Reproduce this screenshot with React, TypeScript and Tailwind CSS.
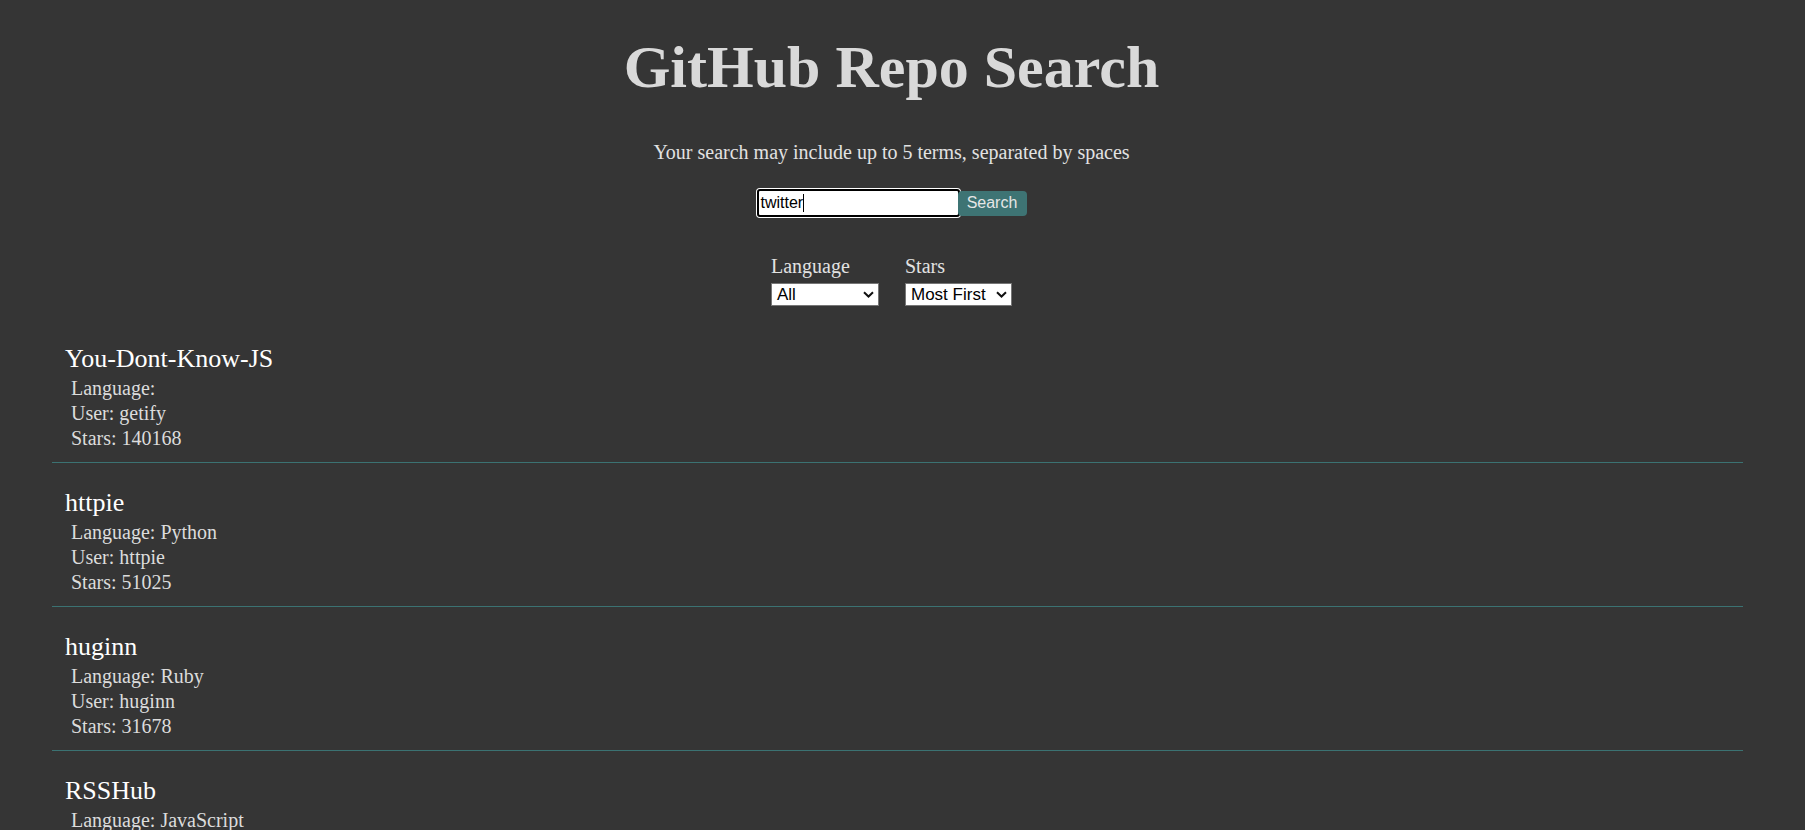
import React from 'react';

type Repo = {
  name: string;
  language: string;
  user: string;
  stars: number;
};

const repos: Repo[] = [
  { name: 'You-Dont-Know-JS', language: '', user: 'getify', stars: 140168 },
  { name: 'httpie', language: 'Python', user: 'httpie', stars: 51025 },
  { name: 'huginn', language: 'Ruby', user: 'huginn', stars: 31678 },
  { name: 'RSSHub', language: 'JavaScript', user: 'DIYgod', stars: 17542 },
  { name: 'twint', language: 'Python', user: 'twintproject', stars: 12384 },
];

function Chevron() {
  return (
    <svg width="11" height="7" viewBox="0 0 11 7" fill="none">
      <path d="M1 1.2 L5.5 5.5 L10 1.2" stroke="#111" strokeWidth="2" />
    </svg>
  );
}

function FakeSelect({ value, width }: { value: string; width: string }) {
  return (
    <div
      className={`${width} h-[23px] flex items-center justify-between bg-white border border-[#767676] pl-[5px] pr-[4px] font-['Liberation_Sans',Arial,sans-serif] text-[17px] leading-none text-black`}
    >
      <span>{value}</span>
      <Chevron />
    </div>
  );
}

function RepoItem({ repo }: { repo: Repo }) {
  return (
    <div className="pt-[23px] pb-[11px] border-b border-[#3b7272]">
      <h2 className="pl-[13px] text-[26px] leading-[33px] text-white">{repo.name}</h2>
      <div className="mt-px pl-[19px] text-[20px] leading-[25px] text-[#dcdcdc]">
        <div>Language: {repo.language}</div>
        <div>User: {repo.user}</div>
        <div>Stars: {repo.stars}</div>
      </div>
    </div>
  );
}

export default function App() {
  return (
    <div className="min-h-screen bg-[#353535] font-['Liberation_Serif',serif] overflow-hidden h-[830px]">
      <header className="pr-[22px] flex flex-col items-center text-center">
        <h1 className="mt-[32px] text-[60px] leading-[70px] font-bold text-[#d9d9d9]">
          GitHub Repo Search
        </h1>
        <p className="mt-[38px] text-[20px] leading-[24px] text-[#e2e2e2]">
          Your search may include up to 5 terms, separated by spaces
        </p>
        <div className="mt-[25px] flex items-center">
          <div className="w-[203px] h-[28px] flex items-center bg-white border-2 border-black rounded-[3px] ring-1 ring-white pl-[2px] font-['Liberation_Sans',Arial,sans-serif] text-[16px] text-black">
            <span>twitter</span>
            <span className="w-px h-[18px] bg-black" />
          </div>
          <button className="-ml-[2px] w-[69px] h-[25px] rounded-[4px] bg-[#3e7474] text-[16px] text-[#e6e6e6] font-['Liberation_Sans',Arial,sans-serif]">
            Search
          </button>
        </div>
        <div className="mt-[37px] flex gap-[26px] text-left">
          <div className="w-[108px]">
            <div className="text-[20px] leading-[24px] text-[#e2e2e2]">Language</div>
            <div className="mt-[5px]">
              <FakeSelect value="All" width="w-[108px]" />
            </div>
          </div>
          <div className="w-[107px]">
            <div className="text-[20px] leading-[24px] text-[#e2e2e2]">Stars</div>
            <div className="mt-[5px]">
              <FakeSelect value="Most First" width="w-[107px]" />
            </div>
          </div>
        </div>
      </header>
      <main className="mt-[13px] ml-[52px] w-[1691px]">
        {repos.map((repo) => (
          <RepoItem key={repo.name} repo={repo} />
        ))}
      </main>
    </div>
  );
}
